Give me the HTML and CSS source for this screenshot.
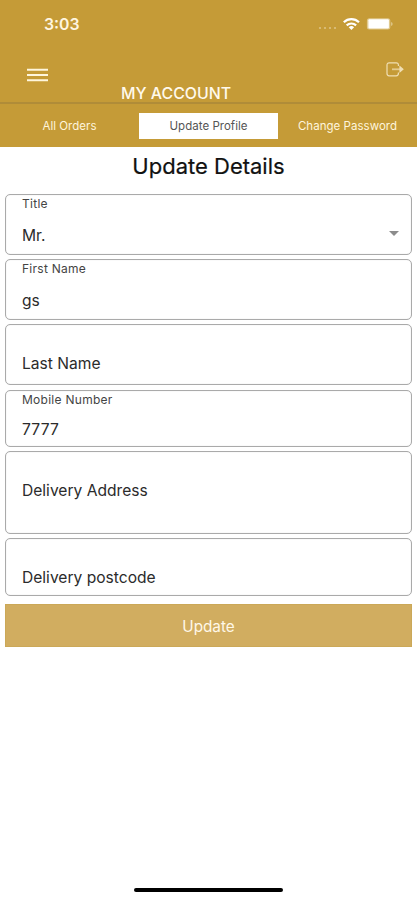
FILE: index.html
```html
<!DOCTYPE html>
<html lang="en">
<head>
<meta charset="utf-8">
<title>My Account</title>
<link rel="stylesheet" href="styles.css">
</head>
<body>
<main class="screen">
  <header class="header">
    <div class="status">
      <span class="time">3:03</span>
      <svg class="indicators" width="76" height="16" viewBox="0 0 76 16">
        <g fill="#dcc283"><circle cx="3" cy="12" r="1.1"/><circle cx="8" cy="12" r="1.1"/><circle cx="13" cy="12" r="1.1"/><circle cx="18" cy="12" r="1.1"/></g>
        <g fill="none" stroke="#fff" stroke-width="2.2"><path d="M26.8 6.2a11 11 0 0 1 15.2 0"/><path d="M29.7 9.4a6.8 6.8 0 0 1 9.4 0"/></g>
        <path d="M31.7 11.3a4 4 0 0 1 5.4 0L34.4 14z" fill="#fff"/>
        <rect x="49.9" y="2.2" width="23.4" height="11.4" rx="2.5" fill="#e0c98e"/>
        <rect x="51.4" y="3.2" width="20.5" height="9.4" rx="1" fill="#fff"/>
        <path d="M74.1 6v4q1.5-.7 1.5-2t-1.5-2z" fill="#e0c98e"/>
      </svg>
    </div>
    <div class="bar">
      <svg class="menu" width="22" height="14" viewBox="0 0 22 14"><path d="M0 1.7h21M0 7h21M0 12.3h21" stroke="#fff6dc" stroke-width="1.9"/></svg>
      <h1 class="title">MY ACCOUNT</h1>
      <svg class="logout" width="18" height="15" viewBox="0 0 18 15" fill="none" stroke="#f0dfb4" stroke-width="1.2"><path d="M12.4 4V3q0-2.2-2.2-2.2H3.2Q1 .8 1 3v8.6q0 2.2 2.2 2.2h7q2.2 0 2.2-2.2V10.6"/><path d="M6 7.3h8" stroke-width="1.8" opacity=".7"/><path d="M14 4.8 16.9 7.3 14 9.8z" fill="#f0dfb4"/></svg>
    </div>
    <nav class="tabs">
      <span class="tab">All Orders</span>
      <span class="tab active">Update Profile</span>
      <span class="tab">Change Password</span>
    </nav>
  </header>
  <h2 class="heading">Update Details</h2>
  <form class="form">
    <div class="field"><span class="label">Title</span><span class="value">Mr.</span><i class="caret"></i></div>
    <div class="field"><span class="label">First Name</span><span class="value">gs</span></div>
    <div class="field empty"><span class="value last-name">Last Name</span></div>
    <div class="field mobile"><span class="label">Mobile Number</span><span class="value number">7777</span></div>
    <div class="field address"><span class="value delivery">Delivery Address</span></div>
    <div class="field postcode"><span class="value post">Delivery postcode</span></div>
    <button class="update" type="button">Update</button>
  </form>
  <div class="home"></div>
</main>
</body>
</html>
```
FILE: styles.css
```css
* { box-sizing: border-box; }
body { margin: 0; background: #fff; font-family: Inter, "Liberation Sans", sans-serif; color: #2b2b2b; }
.screen { width: 417px; height: 900px; display: flex; flex-direction: column; overflow: hidden; }
.header { height: 147px; background: #c59b37; color: #fff; flex: none; }
.status { height: 48px; padding: 15px 24px 0 44px; display: flex; justify-content: space-between; align-items: flex-start; }
.time { font-size: 15.8px; line-height: 19px; font-weight: 600; color: #fff6e0; }
.indicators { margin-top: 1px; }
.bar { height: 56px; display: flex; align-items: flex-start; border-bottom: 2px solid #b08c38; }
.menu { margin: 20px 0 0 27px; }
.title { margin: 36px 0 0 72px; width: 111px; font-size: 15.9px; line-height: 20px; font-weight: 500; color: #fff9ec; white-space: nowrap; }
.logout { margin: 14px 13px 0 auto; }
.tabs { height: 43px; padding-top: 9px; display: grid; grid-template-columns: 139px 139px 139px; }
.tab { height: 26px; line-height: 26px; text-align: center; font-size: 11.5px; letter-spacing: .03px; color: #fff5dc; white-space: nowrap; }
.active { background: #fff; color: #555; }
.heading { margin: 4px 0 0; height: 43px; line-height: 30px; font-size: 22px; font-weight: 400; color: #111; text-align: center; flex: none; -webkit-text-stroke: .2px #111; }
.form { padding: 0 5px; display: flex; flex-direction: column; }
.field { height: 61px; margin-bottom: 4px; padding: 1px 16px 0; border: 1px solid #aaa; border-radius: 5px; display: grid; grid-template-columns: 1fr auto; align-content: start; box-shadow: inset 0 0 1px #ccc; }
.label { grid-column: 1; font-size: 12px; line-height: 15px; letter-spacing: .27px; color: #444; }
.value { grid-column: 1; margin-top: 15px; font-size: 15.6px; line-height: 20px; }
.caret { grid-column: 2; grid-row: 2; margin: 20px -4px 0 0; width: 0; height: 0; border: 5px solid transparent; border-top-color: #8c8c8c; border-bottom: 0; }
.empty { margin-bottom: 5px; }
.last-name { margin-top: 28px; }
.mobile { height: 57px; }
.number { margin-top: 13px; letter-spacing: .2px; }
.address { height: 83px; }
.delivery { margin-top: 28px; }
.postcode { height: 58px; margin-bottom: 8px; }
.post { margin-top: 28px; }
.update { height: 43px; border: 1px solid #cba858; padding: 2px 0 0; background: #d1ad60; color: #fff8e8; font: 400 15.3px/20px Inter, sans-serif; }
.home { width: 149px; height: 4px; margin: auto auto 8px; background: #000; border-radius: 2px; }
```
